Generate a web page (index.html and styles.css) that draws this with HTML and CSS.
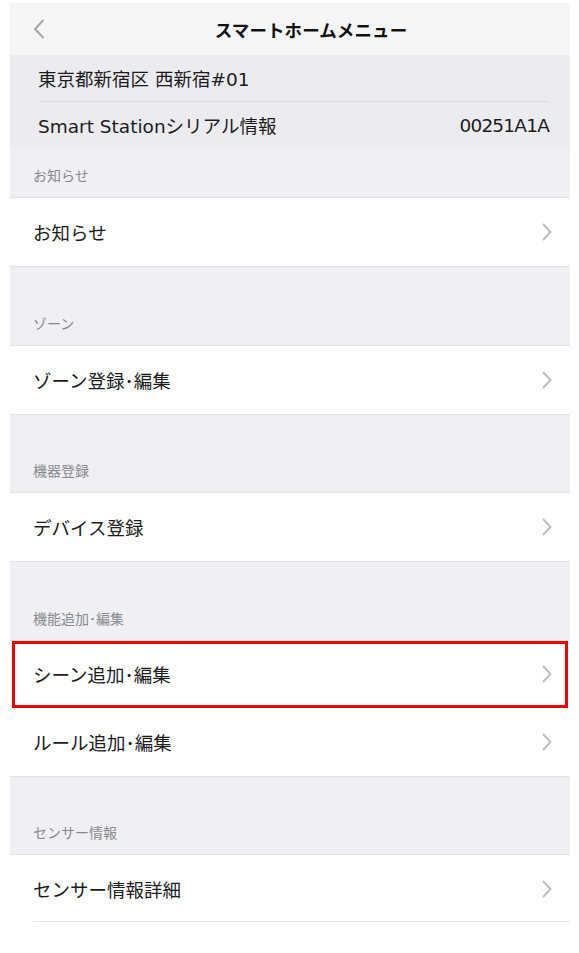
FILE: index.html
```html
<!DOCTYPE html>
<html lang="ja">
<head>
<meta charset="utf-8">
<title>スマートホームメニュー</title>
<link rel="stylesheet" href="styles.css">
</head>
<body>
<div class="screen">
  <header class="navbar">
    <span class="back">
      <svg width="12" height="20" viewBox="0 0 12 20"><path d="M10 1.5 L2 10 L10 18.5" fill="none" stroke="#a6a6aa" stroke-width="2" stroke-linecap="round" stroke-linejoin="round"/></svg>
    </span>
    <h1 class="title">スマートホームメニュー</h1>
  </header>
  <div class="info">
    <div class="info-row">東京都新宿区 西新宿#01</div>
    <div class="info-row info-row--split"><span>Smart Stationシリアル情報</span><span class="serial">00251A1A</span></div>
  </div>

  <section class="group group--first">
    <div class="group-head">お知らせ</div>
    <div class="cell"><span>お知らせ</span><svg class="chev" width="10" height="18" viewBox="0 0 10 18"><path d="M1.5 1.5 L8.5 9 L1.5 16.5" fill="none" stroke="#bdbdc2" stroke-width="2" stroke-linecap="round" stroke-linejoin="round"/></svg></div>
  </section>

  <section class="group">
    <div class="group-head">ゾーン</div>
    <div class="cell"><span>ゾーン登録･編集</span><svg class="chev" width="10" height="18" viewBox="0 0 10 18"><path d="M1.5 1.5 L8.5 9 L1.5 16.5" fill="none" stroke="#bdbdc2" stroke-width="2" stroke-linecap="round" stroke-linejoin="round"/></svg></div>
  </section>

  <section class="group">
    <div class="group-head">機器登録</div>
    <div class="cell"><span>デバイス登録</span><svg class="chev" width="10" height="18" viewBox="0 0 10 18"><path d="M1.5 1.5 L8.5 9 L1.5 16.5" fill="none" stroke="#bdbdc2" stroke-width="2" stroke-linecap="round" stroke-linejoin="round"/></svg></div>
  </section>

  <section class="group">
    <div class="group-head">機能追加･編集</div>
    <div class="cell cell--marked"><span>シーン追加･編集</span><svg class="chev" width="10" height="18" viewBox="0 0 10 18"><path d="M1.5 1.5 L8.5 9 L1.5 16.5" fill="none" stroke="#bdbdc2" stroke-width="2" stroke-linecap="round" stroke-linejoin="round"/></svg></div>
    <div class="cell"><span>ルール追加･編集</span><svg class="chev" width="10" height="18" viewBox="0 0 10 18"><path d="M1.5 1.5 L8.5 9 L1.5 16.5" fill="none" stroke="#bdbdc2" stroke-width="2" stroke-linecap="round" stroke-linejoin="round"/></svg></div>
  </section>

  <section class="group">
    <div class="group-head">センサー情報</div>
    <div class="cell cell--last"><span>センサー情報詳細</span><svg class="chev" width="10" height="18" viewBox="0 0 10 18"><path d="M1.5 1.5 L8.5 9 L1.5 16.5" fill="none" stroke="#bdbdc2" stroke-width="2" stroke-linecap="round" stroke-linejoin="round"/></svg></div>
  </section>
</div>
</body>
</html>
```

FILE: styles.css
```css
html, body {
  background: #ffffff;
}
body {
  margin: 3px 9px 0 10px;
  font-family: "Noto Sans CJK JP", "Noto Sans", sans-serif;
  color: #1c1c1e;
}
.screen {
  width: 560px;
  display: flex;
  flex-direction: column;
}
.navbar {
  height: 52px;
  background: #f5f5f7;
  display: flex;
  align-items: center;
  justify-content: center;
  position: relative;
  padding-left: 42px;
}
.back {
  position: absolute;
  left: 23px;
  top: 16px;
  display: flex;
}
.title {
  margin: 0;
  font-size: 17.5px;
  font-weight: 700;
  letter-spacing: 0.1px;
  color: #111;
}
.info {
  background: #ebebf0;
  padding: 0 21px 0 28px;
  display: flex;
  flex-direction: column;
}
.info-row {
  height: 46px;
  display: flex;
  align-items: center;
  font-family: "DejaVu Sans", "Noto Sans CJK JP", sans-serif;
  font-size: 18.5px;
  color: #1c1c1e;
}
.info-row + .info-row {
  border-top: 1px solid #dcdce0;
}
.info-row--split {
  justify-content: space-between;
}
.serial {
  letter-spacing: -0.8px;
}
.group {
  background: #efeff4;
  display: flex;
  flex-direction: column;
  padding-top: 28.5px;
}
.group--first {
  padding-top: 0;
}
.group-head {
  height: 50px;
  box-sizing: border-box;
  padding: 17px 0 0 23px;
  font-size: 14px;
  color: #8a8a8e;
  border-bottom: 1px solid #e2e2e6;
}
.cell {
  height: 68px;
  background: #fff;
  display: flex;
  align-items: center;
  justify-content: space-between;
  padding: 0 18px 0 23px;
  font-size: 18.5px;
  color: #1c1c1e;
  border-bottom: 1px solid #e2e2e6;
  position: relative;
}
.cell--marked {
  border-bottom: none;
  height: 67px;
}
.cell--marked::after {
  content: "";
  position: absolute;
  top: 0;
  left: 2px;
  right: 2px;
  bottom: 0;
  border: 3px solid #ee0000;
  pointer-events: none;
}
.cell--last {
  border-bottom: none;
  height: 67px;
  background-image: linear-gradient(#e2e2e6, #e2e2e6);
  background-size: calc(100% - 23px) 1px;
  background-position: right bottom;
  background-repeat: no-repeat;
}
.chev {
  display: block;
}
```
